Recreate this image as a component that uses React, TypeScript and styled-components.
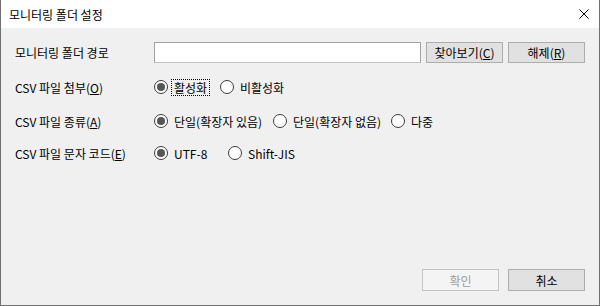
import React from "react";
import styled, { createGlobalStyle } from "styled-components";

const GlobalStyle = createGlobalStyle`
  body {
    margin: 0;
    background: #fff;
  }
`;

const Window = styled.div`
  width: 600px;
  height: 306px;
  box-sizing: border-box;
  display: flex;
  flex-direction: column;
  border: 1px solid #707070;
  border-top: none;
  background: #f0f0f0;
  font-family: "Noto Sans CJK KR", "Noto Sans", sans-serif;
  font-size: 12px;
  color: #000;
`;

const TitleBar = styled.div`
  height: 28px;
  flex-shrink: 0;
  display: flex;
  align-items: center;
  justify-content: space-between;
  background: #fff;
  padding-left: 8px;
`;

const CloseBox = styled.div`
  width: 30px;
  height: 28px;
  display: flex;
  align-items: center;
  justify-content: center;
`;

const Body = styled.div`
  flex: 1;
  display: flex;
  flex-direction: column;
  padding: 14px 13px 14px 14px;
`;

const Row = styled.div<{ $top: number; $h: number }>`
  display: flex;
  align-items: center;
  height: ${(p) => p.$h}px;
  margin-top: ${(p) => p.$top}px;
`;

const Label = styled.div`
  width: 139px;
  flex-shrink: 0;
`;

const TextBox = styled.div`
  width: 267px;
  height: 21px;
  box-sizing: border-box;
  background: #fff;
  border: 1px solid #a2a2a2;
  border-bottom-color: #c4c4c4;
`;

const Button = styled.div<{ $disabled?: boolean; $gap?: number }>`
  width: 77px;
  height: ${(p) => (p.$gap !== undefined ? 21 : 22)}px;
  box-sizing: border-box;
  margin-left: ${(p) => p.$gap ?? 0}px;
  display: flex;
  align-items: center;
  justify-content: center;
  background: ${(p) => (p.$disabled ? "#f4f4f4" : "#e1e1e1")};
  border: 1px solid ${(p) => (p.$disabled ? "#c4c4c4" : "#adadad")};
  color: ${(p) => (p.$disabled ? "#a0a0a0" : "#000")};
`;

const Radio = styled.div<{ $w: number }>`
  width: ${(p) => p.$w}px;
  display: flex;
  align-items: center;
  flex-shrink: 0;
`;

const Circle = styled.div<{ $on?: boolean }>`
  width: 14px;
  height: 14px;
  box-sizing: border-box;
  border-radius: 50%;
  border: 1px solid #3c3c3c;
  background: #fff;
  display: flex;
  align-items: center;
  justify-content: center;
  &::after {
    content: "";
    display: ${(p) => (p.$on ? "block" : "none")};
    width: 8px;
    height: 8px;
    border-radius: 50%;
    background: #555;
  }
`;

const RadioText = styled.span<{ $focus?: boolean }>`
  margin-left: 3px;
  padding: 0 2px;
  line-height: 15px;
  border: 1px dotted ${(p) => (p.$focus ? "#000" : "transparent")};
`;

const Footer = styled.div`
  margin-top: auto;
  display: flex;
  justify-content: flex-end;
  gap: 9px;
  padding-right: 1px;
`;

type Opt = { text: React.ReactNode; w: number; on?: boolean; focus?: boolean };

const RadioGroup = ({ opts }: { opts: Opt[] }) => (
  <>
    {opts.map((o, i) => (
      <Radio key={i} $w={o.w}>
        <Circle $on={o.on} />
        <RadioText $focus={o.focus}>{o.text}</RadioText>
      </Radio>
    ))}
  </>
);

export default function App() {
  return (
    <>
      <GlobalStyle />
      <Window>
        <TitleBar>
          <span>모니터링 폴더 설정</span>
          <CloseBox>
            <svg width="10" height="10" viewBox="0 0 10 10">
              <path d="M0.5 0.5 L9.5 9.5 M9.5 0.5 L0.5 9.5" stroke="#000" strokeWidth="1" />
            </svg>
          </CloseBox>
        </TitleBar>
        <Body>
          <Row $top={0} $h={21}>
            <Label>모니터링 폴더 경로</Label>
            <TextBox />
            <Button $gap={5}>
              찾아보기(<u>C</u>)
            </Button>
            <Button $gap={5}>
              해제(<u>R</u>)
            </Button>
          </Row>
          <Row $top={14} $h={20}>
            <Label>
              CSV 파일 첨부(<u>O</u>)
            </Label>
            <RadioGroup
              opts={[
                { text: "활성화", w: 66, on: true, focus: true },
                { text: "비활성화", w: 80 },
              ]}
            />
          </Row>
          <Row $top={14} $h={20}>
            <Label>
              CSV 파일 종류(<u>A</u>)
            </Label>
            <RadioGroup
              opts={[
                { text: "단일(확장자 있음)", w: 119, on: true },
                { text: "단일(확장자 없음)", w: 118 },
                { text: "다중", w: 60 },
              ]}
            />
          </Row>
          <Row $top={12} $h={20}>
            <Label>
              CSV 파일 문자 코드(<u>E</u>)
            </Label>
            <RadioGroup
              opts={[
                { text: "UTF-8", w: 74, on: true },
                { text: "Shift-JIS", w: 80 },
              ]}
            />
          </Row>
          <Footer>
            <Button $disabled>확인</Button>
            <Button>취소</Button>
          </Footer>
        </Body>
      </Window>
    </>
  );
}
